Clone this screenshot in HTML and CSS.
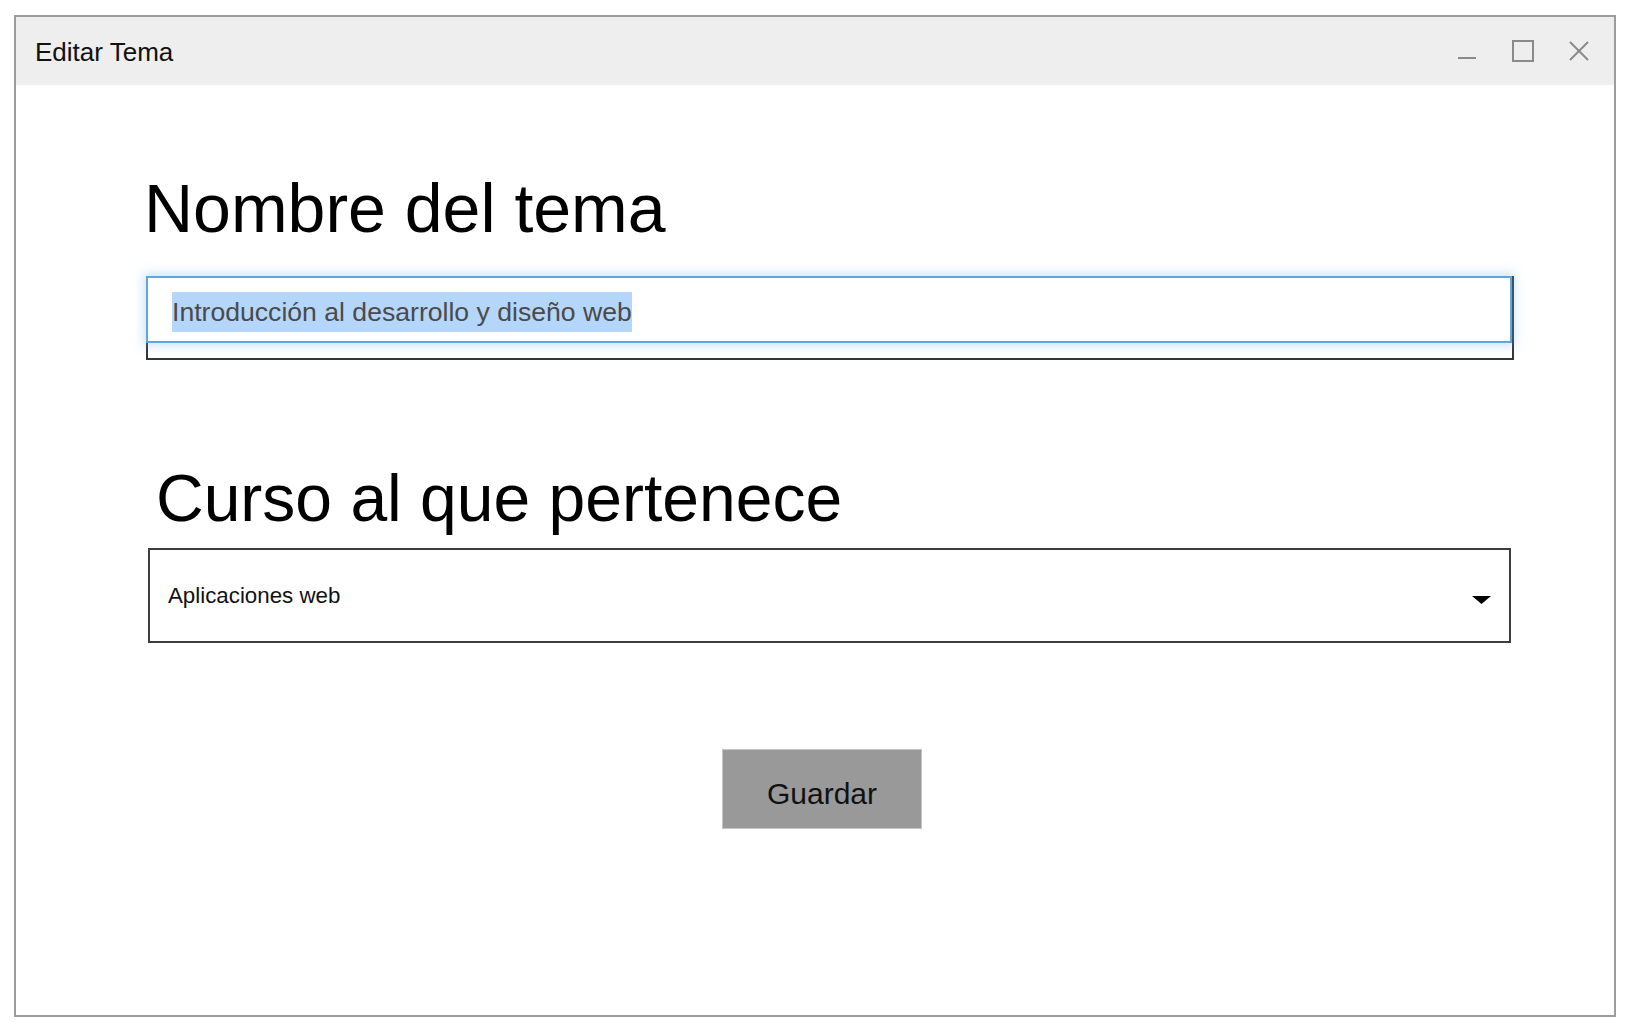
FILE: index.html
```html
<!DOCTYPE html>
<html lang="es">
<head>
<meta charset="utf-8">
<title>Editar Tema</title>
<link rel="stylesheet" href="styles.css">
</head>
<body>
<div class="window">
  <div class="titlebar">
    <span class="title">Editar Tema</span>
    <svg class="controls" width="150" height="40" viewBox="0 0 150 40">
      <line x1="8" y1="27" x2="26" y2="27" stroke="#8a8a8a" stroke-width="2"/>
      <rect x="63" y="10" width="20" height="20" fill="none" stroke="#8a8a8a" stroke-width="2"/>
      <line x1="120" y1="11" x2="138" y2="29" stroke="#8a8a8a" stroke-width="2"/>
      <line x1="138" y1="11" x2="120" y2="29" stroke="#8a8a8a" stroke-width="2"/>
    </svg>
  </div>
  <div class="content">
    <h1 class="label label-name">Nombre del tema</h1>
    <div class="field">
      <div class="focus"><span class="selected">Introducción al desarrollo y diseño web</span></div>
    </div>
    <h2 class="label label-course">Curso al que pertenece</h2>
    <div class="select">
      <span class="select-text">Aplicaciones web</span>
      <svg class="caret" width="19" height="8" viewBox="0 0 19 8"><polygon points="0,0 19,0 9.5,8" fill="#000"/></svg>
    </div>
    <button class="save">Guardar</button>
  </div>
</div>
</body>
</html>
```

FILE: styles.css
```css
* { box-sizing: border-box; }
html, body { margin: 0; padding: 0; background: #ffffff; }
body {
  font-family: "Liberation Sans", Arial, sans-serif;
  color: #000;
}
.window {
  margin: 15px 0 0 14px;
  width: 1602px;
  height: 1002px;
  border: 2px solid #9c9c9c;
  background: #fff;
  display: flex;
  flex-direction: column;
}
.titlebar {
  height: 68px;
  background: #eeeeee;
  display: flex;
  align-items: center;
  padding-left: 19px;
  padding-top: 2px;
  flex-shrink: 0;
}
.title {
  font-size: 26px;
  line-height: 66px;
  color: #111;
}
.controls {
  margin-left: auto;
  margin-right: 14px;
  margin-top: -2px;
}
.content {
  display: flex;
  flex-direction: column;
  align-items: flex-start;
}
.label {
  margin: 0;
  font-weight: normal;
  font-size: 68px;
  line-height: 80px;
  color: #000;
  white-space: nowrap;
}
.label-name {
  margin-top: 83px;
  margin-left: 128px;
}
.field {
  margin-top: 28px;
  margin-left: 130px;
  width: 1368px;
  height: 84px;
  border: 2px solid #353535;
}
.focus {
  margin: -2px 0 0 -2px;
  width: 1366px;
  height: 67px;
  border: 2px solid #5ea6e2;
  background: #fff;
  box-shadow: 0 0 10px 3px rgba(120, 180, 235, 0.35);
  padding: 14px 0 0 24px;
}
.selected {
  display: inline-block;
  background: #b4d6fb;
  font-size: 26.6px;
  line-height: 40px;
  height: 40px;
  color: #4a4a4a;
  white-space: nowrap;
}
.label-course {
  margin-top: 98px;
  margin-left: 140px;
  font-size: 66px;
}
.select {
  margin-top: 10px;
  margin-left: 132px;
  width: 1363px;
  height: 95px;
  border: 2px solid #3e3e3e;
  display: flex;
  align-items: center;
  padding: 0 18px;
}
.select-text {
  font-size: 22.3px;
  color: #111;
}
.caret {
  margin-left: auto;
  margin-top: 8px;
}
.save {
  margin-top: 106px;
  margin-left: 706px;
  width: 200px;
  height: 80px;
  background: #999999;
  border: 1px solid #c4c4c4;
  font-family: "Liberation Sans", Arial, sans-serif;
  font-size: 30px;
  color: #111;
  padding: 10px 0 0 0;
  line-height: 68px;
  text-align: center;
}
```
